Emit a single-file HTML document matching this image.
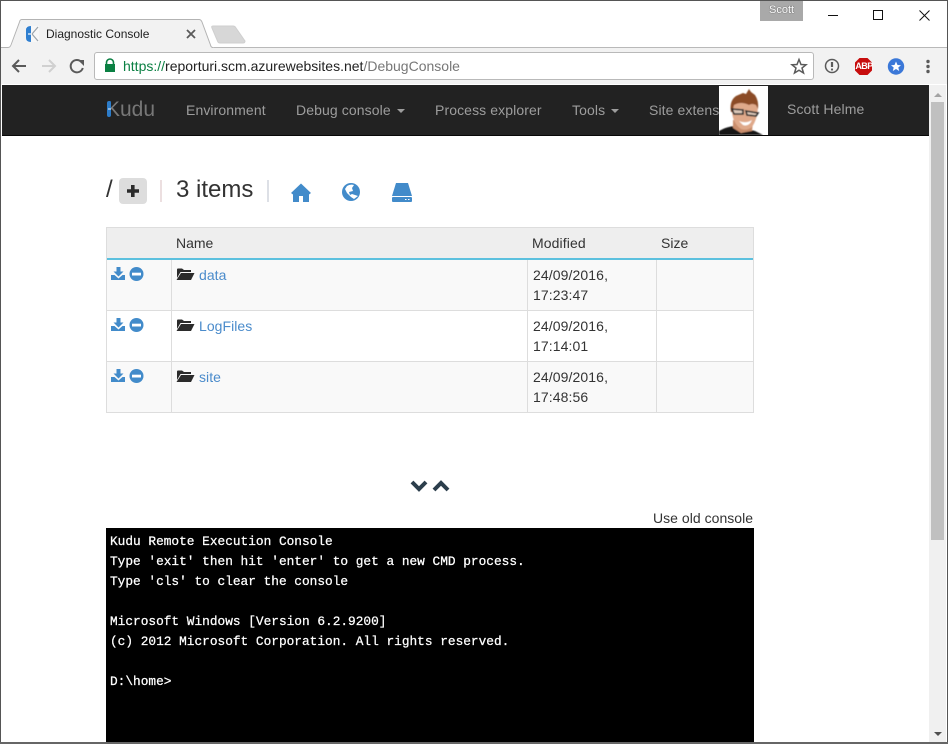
<!DOCTYPE html>
<html><head><meta charset="utf-8"><style>
html,body{margin:0;padding:0;width:948px;height:744px;overflow:hidden;background:#fff;font-family:"Liberation Sans",sans-serif;font-size:14px;color:#333}
.a{position:absolute;white-space:nowrap}
.r{position:absolute}
.nav{color:#9d9d9d;font-size:14px;line-height:20px;top:100px;letter-spacing:.1px}
.link{color:#4a8bcb;letter-spacing:.05px}
.date{font-size:14px;line-height:20px;left:533px;color:#333;letter-spacing:.1px}
</style></head><body>
<!-- window chrome -->
<div class="r" style="left:0;top:0;width:948px;height:84px;background:#fff"></div>
<div class="r" style="left:0;top:48px;width:948px;height:36px;background:#f2f2f2"></div>
<div class="r" style="left:0;top:47px;width:948px;height:1px;background:#b9b9b9"></div>
<svg class="r" style="left:0;top:0" width="260" height="50">
<path d="M7 48 L8 47 L11 47 L20 22 Q21 20 23 20 L199 20 Q201 20 202 22 L211 47 L214 48 Z" fill="#f2f2f2"/>
<path d="M1 47.500 L8 47.500 Q10 47.500 11 45 L19.500 22 Q20 19.500 22 19.500 L199 19.500 Q201 19.500 202 22 L210.500 45 Q211 47.500 213 47.500" fill="none" stroke="#b3b3b3" stroke-width="1"/>
<path d="M212 28 Q211 26 213 26 L233 26 Q235 26 236 28 L245 41 Q245 43 243 43 L220 43 Q218 43 217.500 41 Z" fill="#d7d7d7" stroke="#cfcfcf"/>
<rect x="26" y="26" width="13" height="16" fill="#f7f7f7"/>
<path d="M31 26 Q26 26 26 30 L26 38 Q26 42 31 42 Z" fill="#2f7fd0"/>
<path d="M28 34 L32 34" stroke="#fff" stroke-width="1.200"/>
<path d="M32 34 L38 27 M32 34 L38 41" stroke="#9aa3aa" stroke-width="1.200" fill="none"/>
<path d="M187 30 L195 38 M195 30 L187 38" stroke="#5a5a5a" stroke-width="1.800"/>
</svg>
<div class="a" style="left:46px;top:26px;font-size:12px;line-height:16px;color:#222">Diagnostic Console</div>
<!-- scott badge -->
<div class="r" style="left:760px;top:1px;width:43px;height:20px;background:#a9a9a9"></div>
<div class="a" style="left:769px;top:4px;font-size:11px;line-height:13px;color:#fff;text-shadow:0 0 1px #333">Scott</div>
<svg class="r" style="left:820px;top:5px" width="120" height="22">
<path d="M8 10.500 H18" stroke="#111" stroke-width="1"/>
<rect x="53.500" y="5.500" width="9" height="9" fill="none" stroke="#111" stroke-width="1"/>
<path d="M99.500 5.500 L109.500 15.500 M109.500 5.500 L99.500 15.500" stroke="#111" stroke-width="1"/>
</svg>
<!-- toolbar -->
<svg class="r" style="left:8px;top:54px" width="80" height="26">
<path d="M18 12 H6 M11 6 L5 12 L11 18" fill="none" stroke="#5a5a5a" stroke-width="2"/>
<path d="M34 12 H46 M41 6 L47 12 L41 18" fill="none" stroke="#d0d0d0" stroke-width="2"/>
<path d="M73.500 8 A6.200 6.200 0 1 0 74.800 14" fill="none" stroke="#5a5a5a" stroke-width="2"/>
<path d="M70 6 H76 V12 Z" fill="#5a5a5a"/>
</svg>
<div class="r" style="left:94px;top:52px;width:718px;height:26px;background:#fff;border:1px solid #b9b9b9;border-radius:3px"></div>
<svg class="r" style="left:103px;top:58px" width="14" height="15">
<path d="M3.500 7 V4.500 A3.500 3.500 0 0 1 10.500 4.500 V7" fill="none" stroke="#0b8043" stroke-width="1.600"/>
<rect x="2" y="6" width="10" height="8" fill="#0b8043"/>
</svg>
<div class="a" style="left:123px;top:58px;font-size:14px;line-height:17px;color:#0b8043">https://<span style="color:#222">reporturi.scm.azurewebsites.net</span><span style="color:#777">/DebugConsole</span></div>
<svg class="r" style="left:790px;top:57px" width="150" height="20">
<path d="M9 2.500 L11 7.500 L16 7.800 L12 11 L13.500 16 L9 13.200 L4.500 16 L6 11 L2 7.800 L7 7.500 Z" fill="none" stroke="#5a5a5a" stroke-width="1.500"/>
<circle cx="42" cy="9" r="6.500" fill="none" stroke="#5a5a5a" stroke-width="1.500"/>
<path d="M42 5 V10" stroke="#5a5a5a" stroke-width="2.200"/><circle cx="42" cy="12.500" r="1.100" fill="#5a5a5a"/>
<path d="M69.500 1 H77.500 L82 5.500 V13.500 L77.500 18 H69.500 L65 13.500 V5.500 Z" fill="#c70d0d"/>
<circle cx="106" cy="9.500" r="8.200" fill="#3b78d8"/>
<path d="M106 4.500 L107.500 8 L111 8.200 L108.300 10.500 L109.200 14 L106 12 L102.800 14 L103.700 10.500 L101 8.200 L104.500 8 Z" fill="#fff"/>
<circle cx="138" cy="4.500" r="1.700" fill="#5a5a5a"/><circle cx="138" cy="9.500" r="1.700" fill="#5a5a5a"/><circle cx="138" cy="14.500" r="1.700" fill="#5a5a5a"/>
</svg>
<div class="a" style="left:854px;top:61px;width:20px;text-align:center;font-size:9px;line-height:11px;font-weight:bold;color:#fff;letter-spacing:-.6px">ABP</div>
<!-- navbar -->
<div class="r" style="left:2px;top:85px;width:927px;height:50px;background:#222"></div>
<div class="r" style="left:2px;top:135px;width:927px;height:1px;background:#080808"></div>
<div class="a" style="left:106px;top:98px;font-size:21px;line-height:24px;color:#777">Kudu</div>
<svg class="r" style="left:105px;top:100px" width="16" height="20">
<path d="M2 3 Q2 1 4 1 H5 Q6 1 6 3 V15 Q6 17 4 17 Q2 17 2 15 Z" fill="#2c7cc9"/>
<path d="M3 9 H6" stroke="#e8f0f8" stroke-width="1"/>
</svg>
<div class="a nav" style="left:186px">Environment</div>
<div class="a nav" style="left:296px">Debug console</div>
<div class="r" style="left:397px;top:109px;border-left:4px solid transparent;border-right:4px solid transparent;border-top:4px solid #9d9d9d"></div>
<div class="a nav" style="left:435px">Process explorer</div>
<div class="a nav" style="left:572px">Tools</div>
<div class="r" style="left:611px;top:109px;border-left:4px solid transparent;border-right:4px solid transparent;border-top:4px solid #9d9d9d"></div>
<div class="a nav" style="left:649px">Site extensions</div>
<div class="r" style="left:719px;top:86px;width:49px;height:49px;background:#fff;overflow:hidden">
<svg width="49" height="49">
<defs><filter id="b" x="-10%" y="-10%" width="120%" height="120%"><feGaussianBlur stdDeviation=".55"/></filter></defs>
<g filter="url(#b)">
<path d="M0 49 L0 45 Q7 41 15 40 L22 47 L32 44 L36 45 L44 49 Z" fill="#151515"/>
<path d="M14 34 L14 42 L22 47 L33 45 L34 36 Z" fill="#c98d6c"/>
<path d="M13 20 Q12 36 22 43 Q28 45 33 41 Q38 34 39 22 Q36 12 25 12 Q15 13 13 20 Z" fill="#dfa98a"/>
<path d="M12 26 Q10 15 17 10 L24 7 L27 8 L30 3 L32 6 L36 9 Q40 15 39 23 L37 19 Q33 17 30 19 Q22 15 15 19 Q14 22 14 26 Z" fill="#8b4c26"/>
<path d="M13 23 L24 24 L24 28 L15 28 Z M27 25 L39 27 L37 30 L28 29 Z" fill="#dcc7b8" stroke="#2a2a2a" stroke-width="1.600"/>
<path d="M20 35 Q27 38 33 34 Q30 41 24 39 Z" fill="#fff"/>
</g></svg></div>
<div class="a nav" style="left:787px;top:99px;color:#9d9d9d">Scott Helme</div>
<!-- scrollbar -->
<div class="r" style="left:929px;top:85px;width:17px;height:657px;background:#f0f0f0"></div>
<div class="r" style="left:931px;top:102px;width:13px;height:438px;background:#c0c0c0"></div>
<div class="r" style="left:934px;top:93px;border-left:4px solid transparent;border-right:4px solid transparent;border-bottom:4px solid #a3a3a3"></div>
<div class="r" style="left:934px;top:732px;border-left:4px solid transparent;border-right:4px solid transparent;border-top:4px solid #505050"></div>
<!-- breadcrumb row -->
<div class="a" style="left:106px;top:176px;font-size:24px;line-height:28px">/</div>
<div class="r" style="left:119px;top:178px;width:28px;height:26px;background:#ddd;border-radius:4px"></div>
<svg class="r" style="left:126px;top:184px" width="14" height="14"><path d="M6.800 1 V13 M1 7 H13" stroke="#2b2b2b" stroke-width="3.600"/></svg>
<div class="r" style="left:160px;top:180px;width:2px;height:22px;background:#ecdfe0"></div>
<div class="a" style="left:176px;top:176px;font-size:24px;line-height:28px">3 items</div>
<div class="r" style="left:267px;top:180px;width:2px;height:22px;background:#dde0e6"></div>
<svg class="r" style="left:290px;top:182px" width="130" height="22">
<path d="M11 1.500 L1 11 L3 12.500 V20 H9 V14 H13 V20 H19 V12.500 L21 11 Z" fill="#428bca"/>
<circle cx="61" cy="10" r="9" fill="#428bca"/>
<path d="M57 4 Q60 2 64 3 L62 6 L63 9 L59 10 L60 13 L62 12 L68 14 L64 17 L61 15 L57 11 L55 7 Z" fill="#fff"/>
<path d="M106 1 H118 L122 14 H102 Z" fill="#428bca"/>
<rect x="102" y="15" width="20" height="5" rx="1" fill="#428bca"/>
<path d="M115 17.500 H116.500 M118 17.500 H119.500" stroke="#fff" stroke-width="1"/>
</svg>
<!-- table -->
<div class="r" style="left:106px;top:227px;width:648px;height:186px;background:#fff"></div>
<div class="r" style="left:106px;top:227px;width:648px;height:32px;background:#eee"></div>
<div class="r" style="left:106px;top:258px;width:648px;height:2px;background:#5bc0de"></div>
<div class="r" style="left:107px;top:260px;width:646px;height:50px;background:#f9f9f9"></div>
<div class="r" style="left:107px;top:362px;width:646px;height:50px;background:#f9f9f9"></div>
<div class="r" style="left:106px;top:227px;width:648px;height:1px;background:#ddd"></div>
<div class="r" style="left:106px;top:310px;width:648px;height:1px;background:#ddd"></div>
<div class="r" style="left:106px;top:361px;width:648px;height:1px;background:#ddd"></div>
<div class="r" style="left:106px;top:412px;width:648px;height:1px;background:#ddd"></div>
<div class="r" style="left:106px;top:227px;width:1px;height:186px;background:#ddd"></div>
<div class="r" style="left:753px;top:227px;width:1px;height:186px;background:#ddd"></div>
<div class="r" style="left:171px;top:260px;width:1px;height:152px;background:#ddd"></div>
<div class="r" style="left:527px;top:260px;width:1px;height:152px;background:#ddd"></div>
<div class="r" style="left:656px;top:260px;width:1px;height:152px;background:#ddd"></div>
<div class="a" style="left:176px;top:233px;line-height:20px">Name</div>
<div class="a" style="left:532px;top:233px;line-height:20px;letter-spacing:.1px">Modified</div>
<div class="a" style="left:661px;top:233px;line-height:20px">Size</div>

<svg class="r" style="left:111px;top:266px" width="100" height="18">
<path d="M5.500 1 H9.500 V5.500 H12.500 L7.500 10.500 L2.500 5.500 H5.500 Z" fill="#428bca"/><path d="M0 9 H3.500 L7.500 12.500 L11.500 9 H14 V14 H0 Z" fill="#428bca"/>
<circle cx="25.500" cy="8" r="7" fill="#428bca"/><rect x="21" y="6.700" width="9" height="2.800" fill="#fff"/>
<path d="M66 7 L66 3.500 Q66 2.500 67 2.500 H71 L73 4 H80 V6 H69.500 L66 12 Z M70 7 H83.500 L80 14 H65.500 Z" fill="#2b2b2b"/></svg>
<svg class="r" style="left:111px;top:317px" width="100" height="18">
<path d="M5.500 1 H9.500 V5.500 H12.500 L7.500 10.500 L2.500 5.500 H5.500 Z" fill="#428bca"/><path d="M0 9 H3.500 L7.500 12.500 L11.500 9 H14 V14 H0 Z" fill="#428bca"/>
<circle cx="25.500" cy="8" r="7" fill="#428bca"/><rect x="21" y="6.700" width="9" height="2.800" fill="#fff"/>
<path d="M66 7 L66 3.500 Q66 2.500 67 2.500 H71 L73 4 H80 V6 H69.500 L66 12 Z M70 7 H83.500 L80 14 H65.500 Z" fill="#2b2b2b"/></svg>
<svg class="r" style="left:111px;top:368px" width="100" height="18">
<path d="M5.500 1 H9.500 V5.500 H12.500 L7.500 10.500 L2.500 5.500 H5.500 Z" fill="#428bca"/><path d="M0 9 H3.500 L7.500 12.500 L11.500 9 H14 V14 H0 Z" fill="#428bca"/>
<circle cx="25.500" cy="8" r="7" fill="#428bca"/><rect x="21" y="6.700" width="9" height="2.800" fill="#fff"/>
<path d="M66 7 L66 3.500 Q66 2.500 67 2.500 H71 L73 4 H80 V6 H69.500 L66 12 Z M70 7 H83.500 L80 14 H65.500 Z" fill="#2b2b2b"/></svg>

<div class="a link" style="left:199px;top:265px;line-height:20px">data</div>
<div class="a link" style="left:199px;top:316px;line-height:20px">LogFiles</div>
<div class="a link" style="left:199px;top:367px;line-height:20px">site</div>
<div class="a date" style="top:265px">24/09/2016,<br>17:23:47</div>
<div class="a date" style="top:316px">24/09/2016,<br>17:14:01</div>
<div class="a date" style="top:367px">24/09/2016,<br>17:48:56</div>
<!-- chevrons -->
<svg class="r" style="left:410px;top:479px" width="40" height="14">
<path d="M2 3 L9 10 L16 3" fill="none" stroke="#2c3e4c" stroke-width="4"/>
<path d="M24 11 L31 4 L38 11" fill="none" stroke="#2c3e4c" stroke-width="4"/>
</svg>
<div class="a" style="left:653px;top:508px;line-height:20px;letter-spacing:.03px">Use old console</div>
<!-- console -->
<div class="r" style="left:106px;top:528px;width:648px;height:214px;background:#000"></div>
<div class="r" style="left:110px;top:532px;width:640px;white-space:pre;font-family:'Liberation Mono',monospace;font-size:12.8px;line-height:20px;color:#fff;-webkit-text-stroke:.25px #fff">Kudu Remote Execution Console
Type 'exit' then hit 'enter' to get a new CMD process.
Type 'cls' to clear the console

Microsoft Windows [Version 6.2.9200]
(c) 2012 Microsoft Corporation. All rights reserved.

D:\home&gt;</div>
<!-- window border -->
<div class="r" style="left:0;top:0;width:948px;height:1px;background:#555"></div>
<div class="r" style="left:0;top:0;width:1px;height:744px;background:#555"></div>
<div class="r" style="left:947px;top:0;width:1px;height:744px;background:#555"></div>
<div class="r" style="left:0;top:742px;width:948px;height:2px;background:#666"></div>
</body></html>
